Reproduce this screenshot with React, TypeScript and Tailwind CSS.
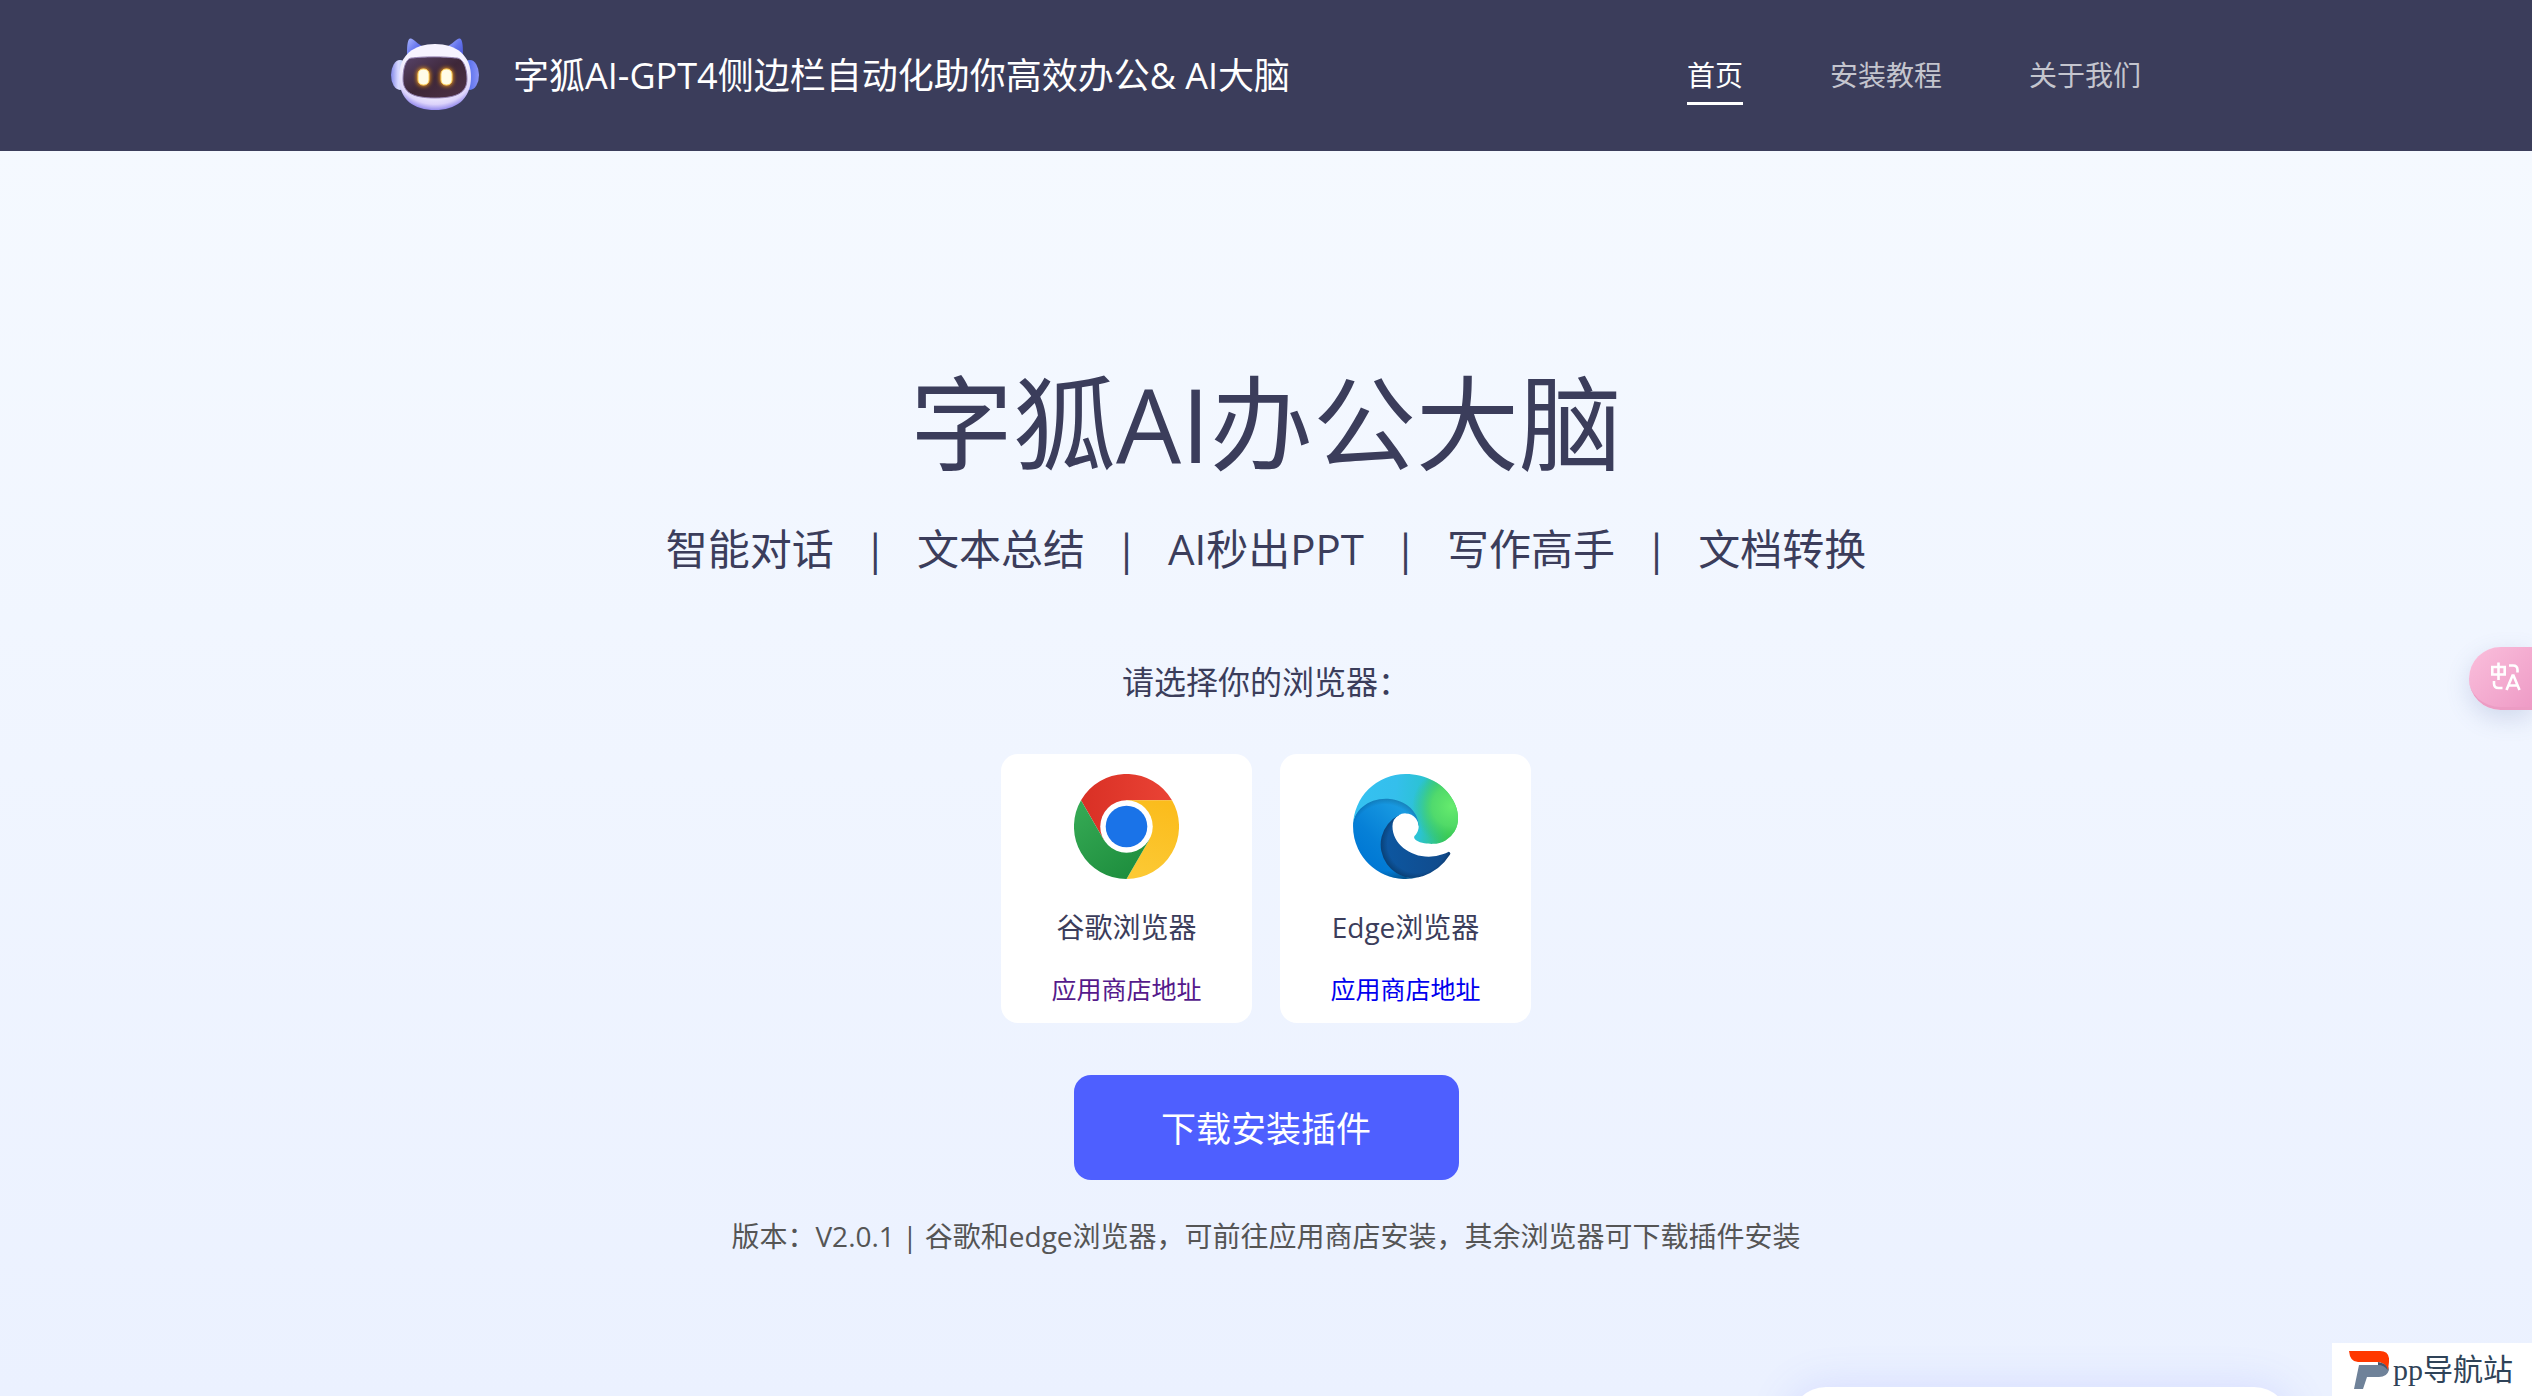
const navItems = [
  { label: '首页', active: true },
  { label: '安装教程', active: false },
  { label: '关于我们', active: false },
];

const features = ['智能对话', '文本总结', 'AI秒出PPT', '写作高手', '文档转换'];

function FoxLogo() {
  return (
    <svg className="w-[88px] h-[88px]" viewBox="0 0 88 88" fill="none">
      <defs>
        <linearGradient id="fox-ear" x1="0" y1="0" x2="1" y2="1">
          <stop offset="0" stopColor="#a9b4ff" />
          <stop offset="0.5" stopColor="#6474ee" />
          <stop offset="1" stopColor="#4650cf" />
        </linearGradient>
        <linearGradient id="fox-side-left" x1="0" y1="0" x2="1" y2="0">
          <stop offset="0" stopColor="#8389e8" />
          <stop offset="0.4" stopColor="#d9d9ff" />
          <stop offset="1" stopColor="#a6d8ff" />
        </linearGradient>
        <linearGradient id="fox-side-right" x1="0" y1="0" x2="1" y2="0">
          <stop offset="0" stopColor="#8fd8ff" />
          <stop offset="0.5" stopColor="#6076ee" />
          <stop offset="1" stopColor="#8b93f5" />
        </linearGradient>
        <radialGradient id="fox-head" cx="0.5" cy="0.34" r="0.7">
          <stop offset="0.6" stopColor="#f6f3ff" />
          <stop offset="0.82" stopColor="#dcd3fb" />
          <stop offset="1" stopColor="#756be6" />
        </radialGradient>
        <linearGradient id="fox-face" x1="0" y1="0" x2="1" y2="1">
          <stop offset="0" stopColor="#57436a" />
          <stop offset="0.5" stopColor="#3e2738" />
          <stop offset="1" stopColor="#4e3247" />
        </linearGradient>
        <filter id="fox-glow" x="-1" y="-1" width="3" height="3">
          <feGaussianBlur stdDeviation="2" />
        </filter>
      </defs>
      <ellipse cx="9" cy="43" rx="9" ry="15" fill="url(#fox-side-left)" />
      <ellipse cx="79" cy="43" rx="9" ry="15" fill="url(#fox-side-right)" />
      <path d="M16 25 C16 16 16 8 19 6.500 C22 5.500 26 12 33 15 L18 27 Z" fill="url(#fox-ear)" />
      <path d="M72 25 C72 16 72 8 69 6.500 C66 5.500 62 12 55 15 L70 27 Z" fill="url(#fox-ear)" />
      <path d="M44 12 C65 12 80 23 80 45 C80 68 64 78 44 78 C23 78 8 68 8 45 C8 23 23 12 44 12 Z" fill="url(#fox-head)" />
      <path
        d="M22 26 C30 24.500 56 24.500 64 26 C72 25 76 36 76 47 C76 60 67 66 44 66 C21 66 12 60 12 47 C12 36 15 25 22 26 Z"
        fill="url(#fox-face)"
        stroke="#9381b1"
        strokeWidth="1"
      />
      <g fill="#ff9f16" filter="url(#fox-glow)">
        <rect x="26" y="36" width="13" height="18" rx="6" />
        <rect x="49" y="36" width="13" height="18" rx="6" />
      </g>
      <g fill="#fffce8" stroke="#ffd45f" strokeWidth="1">
        <rect x="27" y="37" width="11" height="16" rx="5" />
        <rect x="50" y="37" width="11" height="16" rx="5" />
      </g>
    </svg>
  );
}

function ChromeIcon() {
  return (
    <svg className="w-[105px] h-[105px]" viewBox="0 0 48 48">
      <defs>
        <linearGradient id="chrome-red" x1="0" y1="0" x2="1" y2="0">
          <stop offset="0" stopColor="#d93025" />
          <stop offset="1" stopColor="#ea4335" />
        </linearGradient>
        <linearGradient id="chrome-yellow" x1="0.4" y1="1" x2="0.6" y2="0">
          <stop offset="0" stopColor="#fcc934" />
          <stop offset="1" stopColor="#fbbc1c" />
        </linearGradient>
        <linearGradient id="chrome-green" x1="0.7" y1="1" x2="0.1" y2="0.1">
          <stop offset="0" stopColor="#1e8e3e" />
          <stop offset="1" stopColor="#34a853" />
        </linearGradient>
      </defs>
      <path d="M3.2 12 A24 24 0 0 1 44.8 12 H24 V24 L13.6 30 Z" fill="url(#chrome-red)" />
      <path d="M44.8 12 A24 24 0 0 1 24 48 L34.4 30 L24 24 V12 Z" fill="url(#chrome-yellow)" />
      <path d="M24 48 A24 24 0 0 1 3.2 12 L13.6 30 L24 24 L34.4 30 Z" fill="url(#chrome-green)" />
      <circle cx="24" cy="24" r="12" fill="#fff" />
      <circle cx="24" cy="24" r="9.500" fill="#1a73e8" />
    </svg>
  );
}

const edgeNavy =
  'M235.7 195.5c-3.4 1.8-6.900 3.400-10.500 4.700a101.500 101.500 0 0 1-35.900 6.500c-47.300 0-88.500-32.500-88.500-74.300a31.500 31.500 0 0 1 16.400-27.300c-42.800 1.800-53.800 46.400-53.800 72.500 0 73.900 68.100 81.400 82.800 81.400 7.900 0 19.800-2.300 27-4.600l1.300-.4a128.300 128.300 0 0 0 66.600-52.800 4 4 0 0 0-5.400-5.700z';
const edgeBlue =
  'M110.3 246.3A79.200 79.200 0 0 1 87.600 225a80.700 80.700 0 0 1 29.500-120c3.200-1.500 8.500-4.100 15.600-4a32.400 32.400 0 0 1 25.700 13 31.900 31.900 0 0 1 6.300 18.700c0-.2 24.500-79.600-80-79.600-43.900 0-80 41.600-80 78.200a130.200 130.200 0 0 0 12.100 56 128 128 0 0 0 156.400 67 75.500 75.500 0 0 1-62.800-8z';
const edgeCrest =
  'M157 153.8c-.9 1-3.400 2.500-3.400 5.600 0 2.600 1.700 5.200 4.800 7.300 14.300 10 41.400 8.600 41.500 8.600a59.600 59.600 0 0 0 30.300-8.300 61.400 61.400 0 0 0 30.400-52.900c.3-22.400-8-37.300-11.300-43.900C228 28.800 182.300 5 132.600 5a128 128 0 0 0-128 126.200c.5-36.500 36.800-66 80-66 3.500 0 23.500.3 42 10a72.600 72.600 0 0 1 30.900 29.300c6.100 10.600 7.200 24.100 7.200 29.500s-2.700 13.300-7.700 19.800z';

function EdgeIcon() {
  return (
    <svg className="w-[105px] h-[105px]" viewBox="4.6 5 256 256">
      <defs>
        <linearGradient id="edge-navy" x1="58" y1="177" x2="236" y2="177" gradientUnits="userSpaceOnUse">
          <stop offset="0" stopColor="#0c59a4" />
          <stop offset="1" stopColor="#114a8b" />
        </linearGradient>
        <radialGradient id="edge-navy-shade" cx="161" cy="174" r="100" gradientUnits="userSpaceOnUse">
          <stop offset="0.72" stopColor="#000" stopOpacity="0" />
          <stop offset="0.95" stopColor="#000" stopOpacity="0.35" />
          <stop offset="1" stopColor="#000" stopOpacity="0.45" />
        </radialGradient>
        <linearGradient id="edge-blue" x1="157" y1="105" x2="46" y2="226" gradientUnits="userSpaceOnUse">
          <stop offset="0" stopColor="#1b9de2" />
          <stop offset="0.2" stopColor="#1595df" />
          <stop offset="0.67" stopColor="#0680d7" />
          <stop offset="1" stopColor="#0078d4" />
        </linearGradient>
        <radialGradient id="edge-blue-shade" cx="82" cy="160" r="112" gradientUnits="userSpaceOnUse">
          <stop offset="0.72" stopColor="#000" stopOpacity="0" />
          <stop offset="0.94" stopColor="#000" stopOpacity="0.28" />
          <stop offset="1" stopColor="#000" stopOpacity="0.35" />
        </radialGradient>
        <linearGradient id="edge-aqua" x1="15" y1="80" x2="240" y2="100" gradientUnits="userSpaceOnUse">
          <stop offset="0" stopColor="#35c1f1" />
          <stop offset="0.4" stopColor="#34bfec" />
          <stop offset="0.7" stopColor="#2bc3d2" />
          <stop offset="1" stopColor="#36c752" />
        </linearGradient>
        <radialGradient id="edge-lime" cx="245" cy="84" r="96" gradientUnits="userSpaceOnUse">
          <stop offset="0" stopColor="#66eb6e" />
          <stop offset="0.5" stopColor="#54dc68" stopOpacity="0.9" />
          <stop offset="1" stopColor="#36c752" stopOpacity="0" />
        </radialGradient>
      </defs>
      <path d={edgeNavy} fill="url(#edge-navy)" />
      <path d={edgeNavy} fill="url(#edge-navy-shade)" />
      <path d={edgeBlue} fill="url(#edge-blue)" />
      <path d={edgeBlue} fill="url(#edge-blue-shade)" />
      <path d={edgeCrest} fill="url(#edge-aqua)" />
      <path d={edgeCrest} fill="url(#edge-lime)" />
    </svg>
  );
}

function TranslateIcon() {
  return (
    <svg className="w-[30px] h-[30px]" viewBox="0 0 30 30" fill="none" stroke="#fff" strokeWidth="2.6">
      <path d="M1.300 5 H13.700 V12.500 H1.300 Z M7.500 0.500 V18" />
      <path d="M18 3.500 H22 Q26.500 3.500 26.500 8 V10.500" />
      <path d="M3 19 V21.500 Q3 26 7.500 26 H11.500" />
      <path d="M15.500 28 L21.500 13.500 H22.500 L28.500 28 M18 23.500 H26" />
    </svg>
  );
}

function SiteMark() {
  return (
    <svg className="w-10 h-[38px]" viewBox="0 0 40 38">
      <path d="M10 14 H35 Q40 14 40 19 Q38 26 30 26 H18 L14 38 H5 Z" fill="#6f8299" />
      <path d="M0 0 H31 Q41 0 40 11 L39 19 Q36 11 28 11 H9 Q1 11 0 0 Z" fill="#ff3800" />
      <path d="M29 11 Q38 12 38.500 19 Q35 14 29 14 Z" fill="#46566c" />
    </svg>
  );
}

const browsers = [
  { name: '谷歌浏览器', icon: <ChromeIcon />, linkClass: 'text-[#551a8b]' },
  { name: 'Edge浏览器', icon: <EdgeIcon />, linkClass: 'text-[#0000ee]' },
];

export default function App() {
  return (
    <div className="relative min-h-screen overflow-hidden bg-linear-to-b from-[#f6faff] to-[#ebf1ff] font-['Open_Sans','Noto_Sans_CJK_SC',sans-serif] text-[#3b3d5b]">
      <header className="bg-[#3b3d5b]">
        <div className="mx-auto flex h-[151px] max-w-[1750px] items-center justify-between">
          <a href="#" className="flex items-center gap-[34px] text-white">
            <FoxLogo />
            <span className="text-[36px] leading-[48px]">字狐AI-GPT4侧边栏自动化助你高效办公&amp; AI大脑</span>
          </a>
          <nav className="flex gap-[87px] pt-[2px] text-[28px] leading-[54px]">
            {navItems.map((item) => (
              <a
                key={item.label}
                href="#"
                className={item.active ? 'border-b-3 border-white text-white' : 'border-b-3 border-transparent text-[#c4c5ce]'}
              >
                {item.label}
              </a>
            ))}
          </nav>
        </div>
      </header>

      <main className="flex flex-col items-center pt-[204px] pb-[130px]">
        <h1 className="text-[103px] leading-[136px]">字狐AI办公大脑</h1>

        <div className="mt-[30px] flex gap-[30px] text-[42px] leading-[56px]">
          {features.map((feature, i) => (
            <div key={feature} className="flex gap-[30px]">
              {i > 0 && <span>|</span>}
              <span>{feature}</span>
            </div>
          ))}
        </div>

        <p className="mt-[84px] text-[32px] leading-[42px]">请选择你的浏览器：</p>

        <div className="mt-[51px] flex gap-7">
          {browsers.map((browser) => (
            <div key={browser.name} className="flex w-[251px] flex-col items-center rounded-[17px] bg-white pt-5 pb-4">
              {browser.icon}
              <span className="mt-7 text-[28px] leading-[40px]">{browser.name}</span>
              <a href="#" className={`mt-6 text-[25px] leading-[36px] ${browser.linkClass}`}>
                应用商店地址
              </a>
            </div>
          ))}
        </div>

        <button className="mt-[52px] h-[105px] w-[385px] rounded-[17px] bg-[#4e5fff] pt-1 text-[35px] text-white">
          下载安装插件
        </button>

        <p className="mt-9 text-[28px] leading-[40px] text-[#555]">
          版本：V2.0.1 | 谷歌和edge浏览器，可前往应用商店安装，其余浏览器可下载插件安装
        </p>
      </main>

      {/* Translate handle docked to the right edge */}
      <button
        aria-label="翻译"
        className="fixed top-[647px] right-0 flex h-[63px] w-[63px] items-center rounded-l-full border-b-3 border-[#ec9cc4] bg-linear-to-br from-[#fabfdc] to-[#ee9bc6] pl-[22px] shadow-[0_8px_24px_rgba(80,100,160,0.2)]"
      >
        <TranslateIcon />
      </button>

      {/* Panel peeking in from below */}
      <div className="fixed right-[242px] -bottom-[375px] h-96 w-[500px] rounded-[36px] bg-white shadow-[0_0_44px_rgba(90,100,255,0.15)]" />

      <a href="#" className="fixed right-0 bottom-0 flex h-[53px] w-[200px] items-center gap-1 bg-white pl-[17px] text-[#2f4358]">
        <SiteMark />
        <span className="font-['Liberation_Serif','Noto_Sans_CJK_SC',serif] text-[30px] leading-[40px]">pp导航站</span>
      </a>
    </div>
  );
}
